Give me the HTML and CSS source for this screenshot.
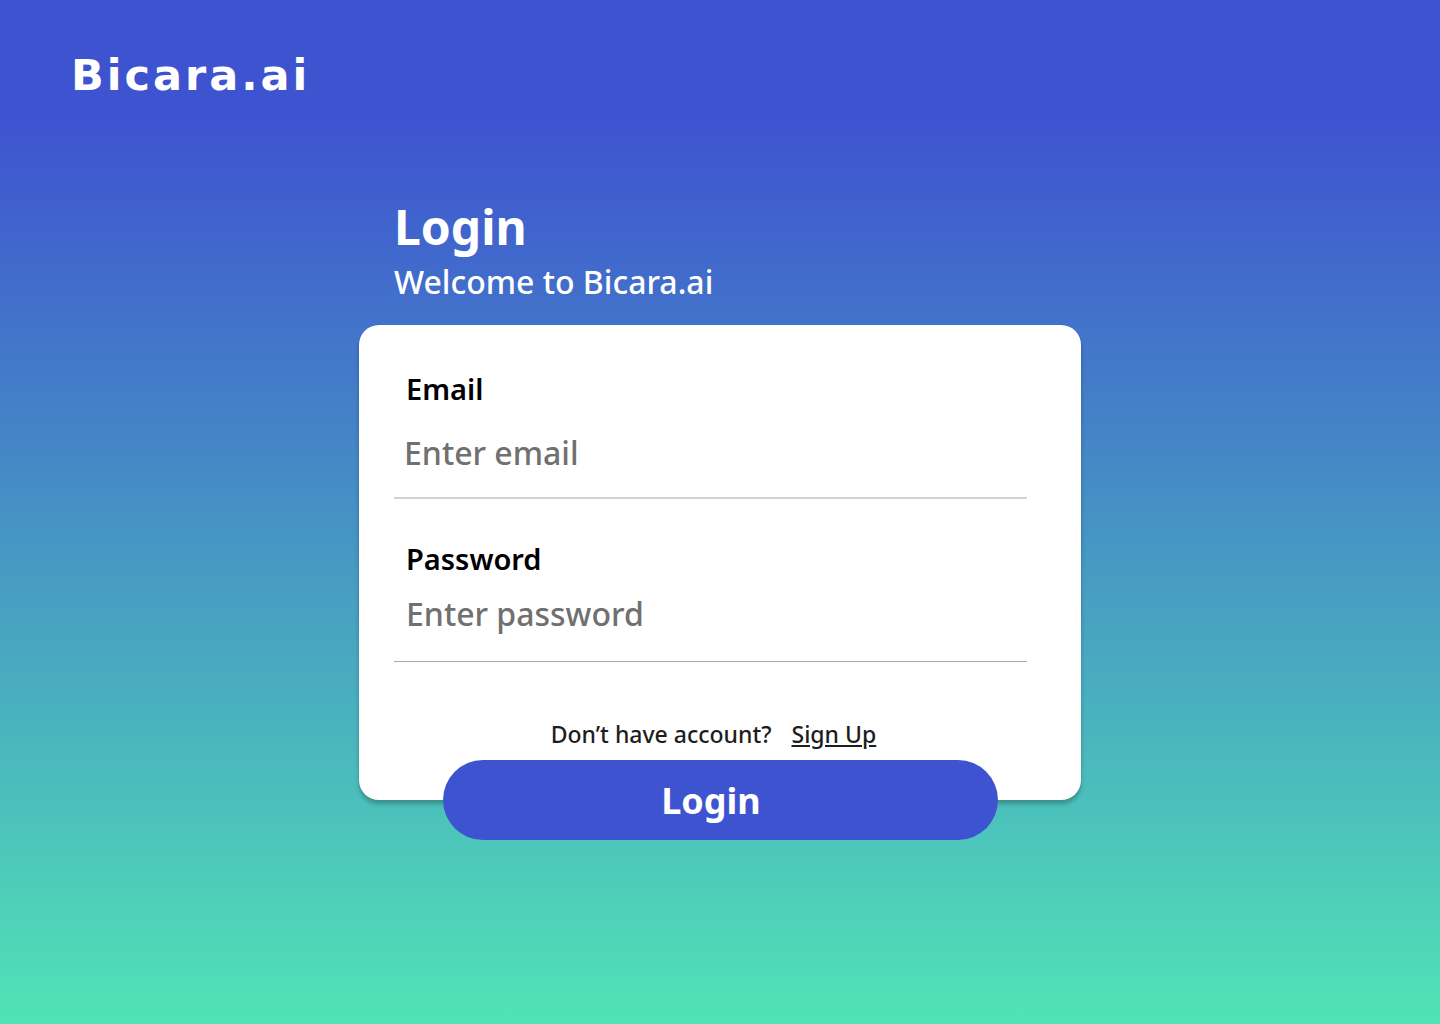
FILE: index.html
```html
<!DOCTYPE html>
<html lang="en">
<head>
<meta charset="utf-8">
<meta name="viewport" content="width=device-width, initial-scale=1">
<title>Login – Bicara.ai</title>
<link rel="stylesheet" href="styles.css">
</head>
<body>
<header class="site-header"><a class="logo" href="#">Bicara.ai</a></header>
<main class="login">
  <div class="intro">
    <h1 class="title">Login</h1>
    <p class="subtitle">Welcome to Bicara.ai</p>
  </div>
  <form class="card">
    <div class="field field-email">
      <label class="label" for="email">Email</label>
      <input class="input" id="email" type="email" placeholder="Enter email">
    </div>
    <div class="field field-password">
      <label class="label" for="password">Password</label>
      <input class="input" id="password" type="password" placeholder="Enter password">
    </div>
    <p class="signup"><span>Don’t have account?</span><a class="signup-link" href="#">Sign Up</a></p>
    <button class="submit" type="submit">Login</button>
  </form>
</main>
</body>
</html>
```

FILE: styles.css
```css
* { box-sizing: border-box; }

body {
  margin: 0;
  min-height: 100vh;
  font-family: "Noto Sans", "Open Sans", sans-serif;
  color: #fff;
  background: linear-gradient(180deg, #3e53d0 12%, #50e3b5 100%);
}

.site-header { padding: 47px 71px 0; }

.logo {
  display: inline-block;
  font: 700 43px/56px "DejaVu Sans", sans-serif;
  letter-spacing: 3px;
  color: #fff;
  text-decoration: none;
}

.login {
  width: 100%;
  max-width: 722px;
  margin: 0 auto;
  padding: 92px 0 183px;
}

.intro { padding: 0 35px 21px; }

.title {
  margin: 0;
  font-size: 48px;
  line-height: 64px;
  font-weight: 700;
}

.subtitle {
  margin: 0;
  font-size: 32px;
  line-height: 45px;
  font-weight: 500;
}

.card {
  display: flex;
  flex-direction: column;
  padding: 44px 54px 0 35px;
  border-radius: 20px;
  background: #fff;
  box-shadow: 0 4px 4px rgba(0, 0, 0, 0.25);
}

.field { display: flex; flex-direction: column; }

.label {
  padding-left: 12px;
  font-size: 29px;
  line-height: 40px;
  font-weight: 600;
  color: #000;
}

.input {
  width: 100%;
  border: 0;
  border-radius: 0;
  background: none;
  outline: none;
  font-family: inherit;
  font-size: 32px;
  line-height: 44px;
  font-weight: 500;
  color: #000;
}

.input::placeholder { color: #707070; opacity: 1; }

.field-email .input {
  height: 90px;
  padding: 0 10px 2px;
  border-bottom: 2px solid #d0d4d4;
}

.field-password { margin-top: 40px; }

.field-password .input {
  height: 83px;
  padding: 0 12px 14px;
  border-bottom: 1px solid #a8a8a8;
}

.signup {
  display: flex;
  justify-content: center;
  gap: 20px;
  margin: 56px 0 10px;
  padding-left: 6px;
  font-size: 23px;
  line-height: 32px;
  font-weight: 500;
  color: #1d1d1d;
}

.signup-link { color: inherit; }

.submit {
  align-self: center;
  width: 555px;
  max-width: 100%;
  height: 80px;
  margin: 0 -19px -40px 0;
  padding: 0 18px 0 0;
  border: 0;
  border-radius: 40px;
  background: #3e53d0;
  font-family: inherit;
  font-size: 36px;
  font-weight: 700;
  color: #fff;
}
```
